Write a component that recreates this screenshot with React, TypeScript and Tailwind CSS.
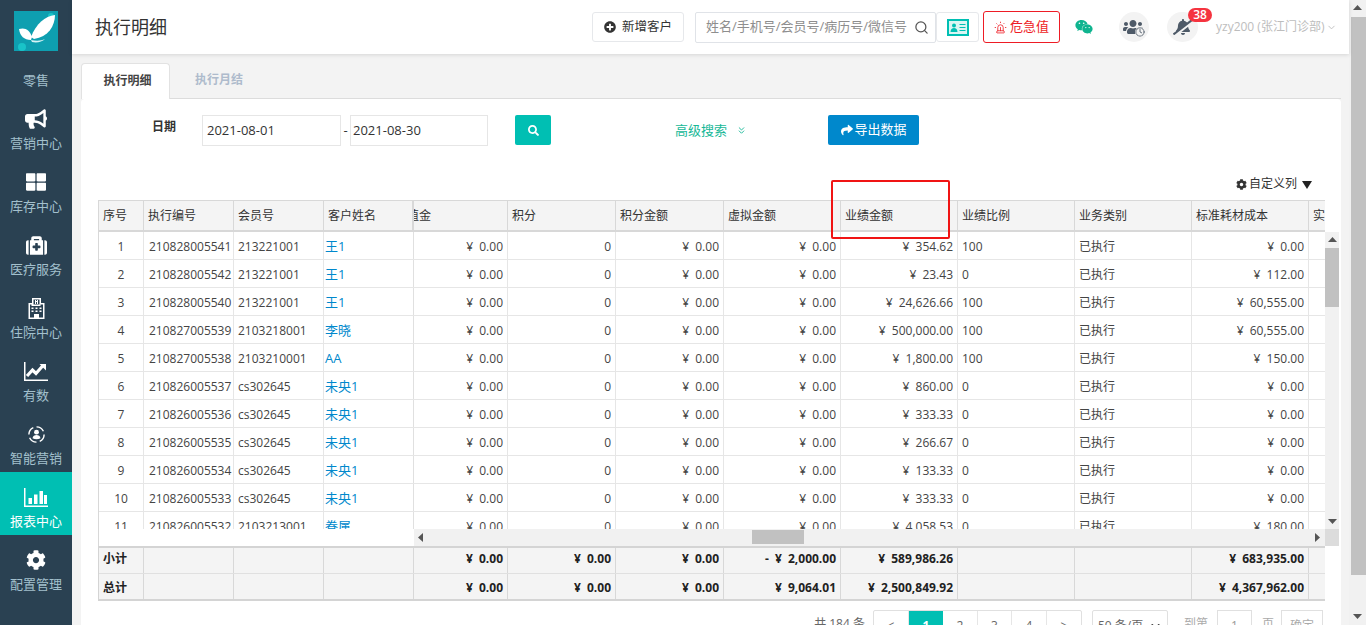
import React from "react";
import { ChevronDown, ChevronsDown, Clock, Search, Siren } from "lucide-react";
import {
  FaBellSlash,
  FaBullhorn,
  FaCog,
  FaMedkit,
  FaPlusCircle,
  FaSearch,
  FaShare,
  FaThLarge,
  FaUsers,
  FaWeixin,
} from "react-icons/fa";

const SmartIcon = () => (
  <svg width="19" height="19" viewBox="0 0 20 20" fill="none">
    <circle cx="10" cy="10" r="8" stroke="white" strokeWidth="1.5" strokeDasharray="9 3.5" />
    <circle cx="10" cy="7.5" r="2.6" fill="white" />
    <path d="M5.8 14c.4-2.6 2-3.6 4.2-3.6s3.800 1 4.200 3.600c-2.500 1.300-5.900 1.300-8.400 0z" fill="white" />
  </svg>
);

const HospitalIcon = () => (
  <svg width="17" height="21" viewBox="0 0 17 21" fill="white">
    <path d="M4 0h9v5h3.500v16H.5V5H4zM5.500 1.500v5h6v-5zM2 6.500V19.500h4V16h5v3.500h4V6.500h-2.500V8h-9V6.500z" fillRule="evenodd" />
    <path d="M7 2h1v1h1V2h1v4H9V4H8v2H7zM3.500 9.500h2v1.500h-2zM7.500 9.500h2v1.500h-2zM11.500 9.500h2v1.500h-2zM3.500 12.500h2v1.500h-2zM7.500 12.500h2v1.500h-2zM11.500 12.500h2v1.500h-2z" />
  </svg>
);

const LineChartIcon = () => (
  <svg width="24" height="19" viewBox="0 0 24 19" fill="none">
    <path d="M.75 0v18.250H24" stroke="white" strokeWidth="1.500" />
    <path d="M3 14l5.500-6 3.500 3.500L19 3.500" stroke="white" strokeWidth="3.200" />
    <path d="M15.500 2H22v6.500z" fill="white" />
  </svg>
);

const BarChartIcon = () => (
  <svg width="24" height="19" viewBox="0 0 24 19" fill="white">
    <path d="M0 0h1.500v17.500H24V19H0z" />
    <path d="M4.500 10h3.500v6H4.500zM10 6.500h3.500V16H10zM15.500 3h3.500v13h-3.500z" />
    <path d="M20 7h3v9h-3z" />
  </svg>
);

const Logo = () => (
  <svg width="44" height="40" viewBox="0 0 44 40">
    <rect width="44" height="40" fill="#0e9fb0" />
    <circle cx="8" cy="36" r="4" fill="#19c3c8" />
    <circle cx="37" cy="5" r="3" fill="#19c3c8" />
    <path d="M17 26C22 13 31 5 41 4c0 11-7 22-21 24z" fill="white" />
    <path d="M5 18c6-2 11 1 13 8l-1 3C10 29 6 25 5 18z" fill="white" />
    <path d="M17 29c5 1 10 1 14-1-3 3-8 4-13 3z" fill="#d8f3f5" />
  </svg>
);

const IdCard = () => (
  <svg width="22" height="17" viewBox="0 0 22 17">
    <rect x="1" y="1" width="20" height="15" fill="#d9f5f3" stroke="#00bfb3" strokeWidth="2" />
    <circle cx="7" cy="6.500" r="2" fill="#00bfb3" />
    <path d="M3.500 13c.2-3 1.500-4 3.500-4s3.300 1 3.500 4z" fill="#00bfb3" />
    <path d="M12.500 5.500h6M12.500 8.500h6M12.500 11.500h6" stroke="#00bfb3" strokeWidth="1.200" />
  </svg>
);

const Triangle = ({ dir }: { dir: "up" | "down" | "left" | "right" }) => {
  const paths = {
    up: "M0 6 L4.500 1 L9 6 Z",
    down: "M0 2 L4.500 7 L9 2 Z",
    left: "M6 0 L1 4.500 L6 9 Z",
    right: "M2 0 L7 4.500 L2 9 Z",
  };
  return (
    <svg width="9" height="9" viewBox="0 0 9 9" fill="#555">
      <path d={paths[dir]} />
    </svg>
  );
};

const navItems = [
  { label: "营销中心", icon: <FaBullhorn size={22} /> },
  { label: "库存中心", icon: <FaThLarge size={20} /> },
  { label: "医疗服务", icon: <FaMedkit size={21} /> },
  { label: "住院中心", icon: <HospitalIcon /> },
  { label: "有数", icon: <LineChartIcon /> },
  { label: "智能营销", icon: <SmartIcon /> },
  { label: "报表中心", icon: <BarChartIcon />, active: true },
  { label: "配置管理", icon: <FaCog size={20} /> },
];

const fixedCols = ["w-[45px] border-r", "w-[90px] border-r", "w-[90px] border-r", "w-[88px]"];

const scrollCols = [
  { title: "储值金", w: "w-[117px] shrink-0 -ml-[23px]" },
  { title: "积分", w: "w-[108px] shrink-0" },
  { title: "积分金额", w: "w-[108px] shrink-0" },
  { title: "虚拟金额", w: "w-[117px] shrink-0" },
  { title: "业绩金额", w: "w-[117px] shrink-0" },
  { title: "业绩比例", w: "w-[117px] shrink-0" },
  { title: "业务类别", w: "w-[117px] shrink-0" },
  { title: "标准耗材成本", w: "w-[117px] shrink-0" },
  { title: "实收金额", w: "w-[117px] shrink-0" },
];

const rows = [
  ["1", "210828005541", "213221001", "王1", "¥ 354.62", "100", "¥ 0.00"],
  ["2", "210828005542", "213221001", "王1", "¥ 23.43", "0", "¥ 112.00"],
  ["3", "210828005540", "213221001", "王1", "¥ 24,626.66", "100", "¥ 60,555.00"],
  ["4", "210827005539", "2103218001", "李晓", "¥ 500,000.00", "100", "¥ 60,555.00"],
  ["5", "210827005538", "2103210001", "AA", "¥ 1,800.00", "100", "¥ 150.00"],
  ["6", "210826005537", "cs302645", "未央1", "¥ 860.00", "0", "¥ 0.00"],
  ["7", "210826005536", "cs302645", "未央1", "¥ 333.33", "0", "¥ 0.00"],
  ["8", "210826005535", "cs302645", "未央1", "¥ 266.67", "0", "¥ 0.00"],
  ["9", "210826005534", "cs302645", "未央1", "¥ 133.33", "0", "¥ 0.00"],
  ["10", "210826005533", "cs302645", "未央1", "¥ 333.33", "0", "¥ 0.00"],
  ["11", "210826005532", "2103213001", "眷属", "¥ 4,058.53", "0", "¥ 180.00"],
];

const footers = [
  {
    label: "小计",
    h: "h-[26px] leading-[22px] border-b border-[#e0e0e0]",
    values: ["¥ 0.00", "¥ 0.00", "¥ 0.00", "- ¥ 2,000.00", "¥ 589,986.26", "", "", "¥ 683,935.00", ""],
  },
  {
    label: "总计",
    h: "h-[25px] leading-[27px]",
    values: ["¥ 0.00", "¥ 0.00", "¥ 0.00", "¥ 9,064.01", "¥ 2,500,849.92", "", "", "¥ 4,367,962.00", ""],
  },
];

const Sidebar = () => (
  <aside className="w-[72px] shrink-0 bg-[#2a4152] text-[#a3c0cd] flex flex-col items-center text-[13px]">
    <div className="mt-[11px]">
      <Logo />
    </div>
    <div className="h-[43px] w-full pt-[19px] text-center leading-[20px]">零售</div>
    {navItems.map((item) => (
      <div
        key={item.label}
        className={`w-full h-[63px] shrink-0 flex flex-col items-center pt-[13px] ${
          item.active ? "bg-[#00bfb3] text-white" : ""
        }`}
      >
        <div className="h-[24px] flex items-center text-white">{item.icon}</div>
        <div className="leading-[20px] mt-[2px]">{item.label}</div>
      </div>
    ))}
  </aside>
);

const TopBar = () => (
  <header className="h-[54px] shrink-0 bg-white flex items-center pl-[23px] pr-[12px] shadow-[0_1px_4px_rgba(0,0,0,0.12)] relative">
    <h1 className="text-[18px] text-[#333] font-normal">执行明细</h1>
    <div className="ml-auto flex items-center">
      <button className="w-[92px] h-[30px] border border-[#e6e8eb] rounded-[3px] flex items-center justify-center gap-[6px] text-[12.500px] text-[#333]">
        <FaPlusCircle size={12} />
        新增客户
      </button>
      <div className="ml-[11px] w-[241px] h-[31px] border border-[#e0e3e8] rounded-[2px] flex items-center pl-[10px] pr-[6px] text-[13px] text-[#8e8e8e]">
        <span className="flex-1 whitespace-nowrap">姓名/手机号/会员号/病历号/微信号</span>
        <Search size={15} className="text-[#555]" />
      </div>
      <div className="w-[43px] h-[30px] border border-[#e6e8eb] rounded-[3px] flex items-center justify-center">
        <IdCard />
      </div>
      <button className="ml-[4px] w-[77px] h-[32px] border border-[#ee1c25] rounded-[3px] flex items-center justify-center gap-[3px] text-[13px] text-[#ee1c25]">
        <Siren size={13} strokeWidth={1.5} />
        危急值
      </button>
      <FaWeixin size={18} className="ml-[15px] text-[#0fb48f]" />
      <div className="ml-[26px] w-[30px] h-[30px] rounded-full bg-[#f3f3f3] flex items-center justify-center relative text-[#4e5a68]">
        <FaUsers size={20} className="-ml-[3px]" />
        <Clock size={10} className="absolute right-[4px] bottom-[5px] bg-[#f3f3f3] rounded-full" />
      </div>
      <div className="ml-[18px] w-[31px] h-[30px] rounded-full bg-[#f3f3f3] flex items-center justify-center relative text-[#4e5a68]">
        <FaBellSlash size={20} className="scale-x-[-1]" />
        <span className="absolute left-[21px] -top-[4px] w-[24px] h-[14px] rounded-full bg-[#f5333f] text-white text-[12px] font-semibold leading-[14px] text-center">
          38
        </span>
      </div>
      <span className="ml-[18px] text-[12px] text-[#bdbdbd] whitespace-nowrap w-[110px]">yzy200 (张江门诊部)</span>
      <ChevronDown size={11} className="text-[#bdbdbd]" />
    </div>
  </header>
);

const Filters = () => (
  <div className="h-[31px] mt-[16px] flex items-start text-[13px] text-[#333]">
    <span className="ml-[54px] w-[50px] text-[12px] font-bold leading-[24px]">日期</span>
    <div className="w-[139px] h-[31px] border border-[#e6e6e6] pl-[4px] leading-[29px]">2021-08-01</div>
    <span className="w-[9px] leading-[31px] text-center">-</span>
    <div className="w-[138px] h-[31px] border border-[#e6e6e6] pl-[2px] leading-[29px]">2021-08-30</div>
    <button className="ml-[27px] w-[36px] h-[30px] bg-[#00bfb3] rounded-[2px] flex items-center justify-center text-white">
      <FaSearch size={11} />
    </button>
    <span className="ml-[124px] leading-[30px] text-[#17b897] whitespace-nowrap">高级搜索</span>
    <ChevronsDown size={11} className="ml-[9px] mt-[10px] text-[#17b897]" />
    <button className="ml-[81px] w-[91px] h-[30px] bg-[#0088cc] rounded-[2px] flex items-center justify-center gap-[2px] text-white">
      <FaShare size={12} />
      导出数据
    </button>
  </div>
);

const Table = () => (
  <div className="w-[1241px]">
    <div className="w-[1227px] h-[32px] flex border-t border-l border-b-2 border-[#d8d8d8] bg-[#f4f4f4] text-[12px] text-[#333]">
      <div className="flex shrink-0 border-r-2 border-[#d8d8d8]">
        {["序号", "执行编号", "会员号", "客户姓名"].map((title, i) => (
          <div key={title} className={`${fixedCols[i]} border-[#d8d8d8] pl-[4px] leading-[30px]`}>
            {title}
          </div>
        ))}
      </div>
      <div className="flex-1 flex overflow-hidden">
        {scrollCols.map((col) => (
          <div key={col.title} className={`${col.w} border-r border-[#d8d8d8] pl-[4px] leading-[30px] whitespace-nowrap`}>
            {col.title}
          </div>
        ))}
      </div>
    </div>

    <div className="h-[297px] flex">
      <div className="w-[1227px] overflow-hidden border-l border-[#d8d8d8] text-[12px] text-[#444]">
        {rows.map((row) => (
          <div key={row[0]} className="h-[28px] flex border-b border-[#e6e6e6] leading-[29px]">
            <div className="flex shrink-0 border-r border-[#e0e0e0]">
              <div className="w-[45px] text-center border-r border-[#e6e6e6]">{row[0]}</div>
              <div className="w-[90px] pl-[5px] border-r border-[#e6e6e6]">{row[1]}</div>
              <div className="w-[90px] pl-[4px] border-r border-[#e6e6e6]">{row[2]}</div>
              <div className="w-[89px] pl-[1px] text-[13px] leading-[28px] text-[#0088cc]">{row[3]}</div>
            </div>
            <div className="flex-1 flex overflow-hidden">
              {scrollCols.map((col, i) => {
                let value = "¥ 0.00";
                if (i === 1) value = "0";
                if (i === 4) value = row[4];
                if (i === 5) value = row[5];
                if (i === 6) value = "已执行";
                if (i === 7) value = row[6];
                if (i === 8) value = "";
                const left = i === 5 || i === 6;
                return (
                  <div
                    key={col.title}
                    className={`${col.w} border-r border-[#e6e6e6] whitespace-nowrap [word-spacing:3px] ${
                      left ? "pl-[4px]" : "text-right pr-[4px]"
                    }`}
                  >
                    {value}
                  </div>
                );
              })}
            </div>
          </div>
        ))}
      </div>
      <div className="w-[14px] bg-[#f1f1f1] flex flex-col items-center">
        <div className="h-[16px] flex items-center">
          <Triangle dir="up" />
        </div>
        <div className="w-full h-[59px] bg-[#c1c1c1]" />
        <div className="mt-auto h-[16px] flex items-center">
          <Triangle dir="down" />
        </div>
      </div>
    </div>

    <div className="h-[17px] flex">
      <div className="w-[316px] shrink-0 bg-white border-l border-[#d8d8d8]" />
      <div className="flex-1 bg-[#f1f1f1] flex items-center px-[3px] relative">
        <Triangle dir="left" />
        <div className="absolute left-[338px] top-[1px] w-[52px] h-[14px] bg-[#c1c1c1]" />
        <div className="ml-auto">
          <Triangle dir="right" />
        </div>
      </div>
      <div className="w-[14px] bg-[#dcdcdc]" />
    </div>

    <div className="w-[1227px] border-t-2 border-l border-b-2 border-[#d4d4d4] bg-[#f4f4f4] text-[12px] text-[#222] font-bold">
      {footers.map((foot) => (
        <div key={foot.label} className={`${foot.h} flex`}>
          <div className="flex shrink-0">
            <div className="w-[45px] pl-[4px] border-r border-[#d8d8d8]">{foot.label}</div>
            <div className="w-[90px] border-r border-[#d8d8d8]" />
            <div className="w-[90px] border-r border-[#d8d8d8]" />
            <div className="w-[90px] border-r border-[#d8d8d8]" />
          </div>
          <div className="flex-1 flex overflow-hidden">
            {scrollCols.map((col, i) => (
              <div key={col.title} className={`${col.w} border-r border-[#d8d8d8] text-right pr-[4px] whitespace-nowrap [word-spacing:3px]`}>
                {foot.values[i]}
              </div>
            ))}
          </div>
        </div>
      ))}
    </div>
  </div>
);

const Pagination = () => (
  <div className="mt-[9px] w-[1225px] flex items-center justify-end text-[12px] text-[#666]">
    <span className="mr-[8px] -mt-[4px]">共 184 条</span>
    <div className="flex h-[32px] border border-[#e0e0e0] rounded-[2px] text-center leading-[30px]">
      <span className="w-[35px] border-r border-[#e6e6e6]">&lt;</span>
      <span className="w-[34px] bg-[#00bfb3] text-white font-bold">1</span>
      <span className="w-[35px] border-r border-[#e6e6e6]">2</span>
      <span className="w-[34px] border-r border-[#e6e6e6]">3</span>
      <span className="w-[35px] border-r border-[#e6e6e6]">4</span>
      <span className="w-[34px]">&gt;</span>
    </div>
    <div className="ml-[10px] w-[76px] h-[32px] border border-[#e0e0e0] rounded-[2px] flex items-center justify-between px-[5px]">
      50 条/页
      <ChevronDown size={13} strokeWidth={3} className="text-[#333]" />
    </div>
    <span className="ml-[16px] -mt-[4px] text-[#aaa]">到第</span>
    <div className="ml-[9px] w-[35px] h-[32px] border border-[#e0e0e0] text-center leading-[30px] text-[#999]">1</div>
    <span className="ml-[10px] -mt-[4px] text-[#aaa]">页</span>
    <div className="ml-[7px] w-[42px] h-[32px] border border-[#e0e0e0] text-center leading-[30px] text-[#aaa]">确定</div>
  </div>
);

const App = () => {
  return (
    <div className="w-[1366px] h-[625px] overflow-hidden flex font-['Open_Sans','Noto_Sans_CJK_SC',sans-serif]">
      <Sidebar />
      <div className="flex-1 min-w-0 flex flex-col bg-[#f3f3f3]">
        <TopBar />
        <div className="flex flex-col pl-[9px] pr-[8px] pt-[9px]">
          <div className="h-[36px] flex text-[12px] font-bold border-b border-[#dcdcdc]">
            <div className="w-[89px] h-[36px] bg-white border border-b-0 border-[#e2e2e2] rounded-t-[4px] pl-[4px] text-center leading-[34px] text-[#444]">
              执行明细
            </div>
            <div className="w-[98px] text-center leading-[34px] text-[#aebbcc]">执行月结</div>
          </div>
          <div className="relative bg-white rounded-t-[4px] pl-[17px] h-[530px]">
            <Filters />
            <div className="h-[54px] w-[1214px] flex items-end justify-end pb-[7px] text-[12px] text-[#333]">
              <FaCog size={11} className="mr-[2px] mb-[3px]" />
              自定义列
              <span className="ml-[5px] mb-[4px]">
                <svg width="10" height="8" viewBox="0 0 10 8" fill="#222">
                  <path d="M0 0h10L5 8z" />
                </svg>
              </span>
            </div>
            <Table />
            <Pagination />
            <div className="absolute left-[750px] top-[81px] w-[119px] h-[59px] border-2 border-[#f01414] rounded-[2px]" />
          </div>
        </div>
      </div>
      <div className="w-[17px] shrink-0 bg-[#f1f1f1] flex flex-col items-center">
        <div className="h-[17px] flex items-center">
          <Triangle dir="up" />
        </div>
        <div className="w-[15px] ml-[2px] h-[558px] bg-[#c1c1c1]" />
        <div className="mt-auto h-[17px] flex items-center">
          <Triangle dir="down" />
        </div>
      </div>
    </div>
  );
};

export default App;
